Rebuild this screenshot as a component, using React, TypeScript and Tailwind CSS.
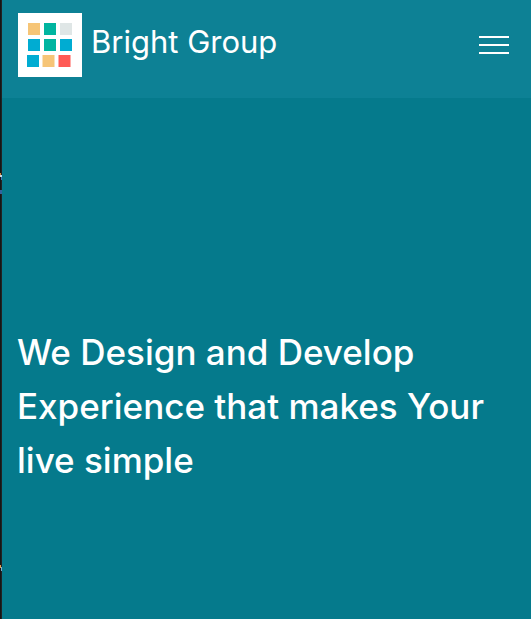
const tiles = [
  { x: 10, y: 10, color: '#f6c577' },
  { x: 26, y: 10, color: '#00b5a0' },
  { x: 42, y: 10, color: '#dfe6e6' },
  { x: 10, y: 26, color: '#00acd2' },
  { x: 26, y: 26, color: '#00b5a0' },
  { x: 42, y: 26, color: '#00acd2' },
  { x: 9, y: 42, color: '#00acd2' },
  { x: 24.5, y: 42, color: '#f6c577' },
  { x: 40.5, y: 42, color: '#ff5a55' },
];

function Logo() {
  return (
    <svg viewBox="0 0 64 64" className="size-16 bg-white" aria-hidden="true">
      {tiles.map((t) => (
        <rect key={`${t.x}-${t.y}`} x={t.x} y={t.y} width="12" height="12" fill={t.color} />
      ))}
    </svg>
  );
}

function BackdropEdge() {
  return (
    <svg className="w-0.5 shrink-0 self-stretch bg-[#151515]" aria-hidden="true">
      <rect x="1" y="0" width="1" height="100%" fill="#222222" />
      <rect x="0" y="173" width="1" height="2" fill="#d98a3c" />
      <rect x="0" y="175" width="2" height="2" fill="#c9d6e0" />
      <rect x="1" y="177" width="1" height="3" fill="#3f78b8" />
      <rect x="0" y="190" width="2" height="4" fill="#33649f" />
      <rect x="0" y="565" width="1" height="3" fill="#e0a050" />
      <rect x="1" y="567" width="1" height="4" fill="#7fb0d0" />
    </svg>
  );
}

export default function App() {
  return (
    <div className="flex min-h-screen bg-[#057a8c] font-['Inter',sans-serif] text-white">
      <BackdropEdge />
      <div className="min-w-0 flex-1">
        <header className="flex items-start justify-between bg-[#0d8195] pt-[13px] pr-[22px] pb-[21px] pl-4">
          <a href="#" className="flex gap-[9px]">
            <Logo />
            <span className="pt-[5px] text-[31px] leading-[48px]">Bright Group</span>
          </a>
          <button type="button" aria-label="Open menu" className="flex h-16 flex-col justify-center gap-1.5">
            <span className="h-0.5 w-[30px] bg-white" />
            <span className="h-0.5 w-[30px] bg-white" />
            <span className="h-0.5 w-[30px] bg-white" />
          </button>
        </header>
        <main className="px-[15px] pt-[227px] pb-20">
          <h1 className="text-[35px] leading-[54px] font-medium">
            We Design and Develop Experience that makes Your live simple
          </h1>
        </main>
      </div>
    </div>
  );
}
